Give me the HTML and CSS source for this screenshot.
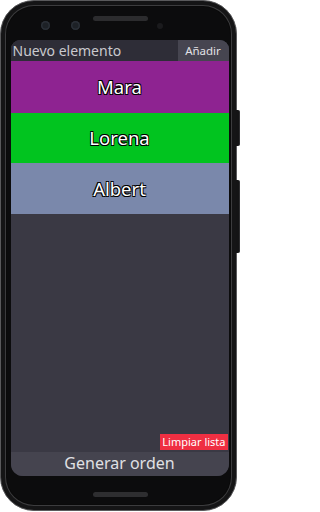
FILE: index.html
```html
<!DOCTYPE html>
<html lang="es">
<head>
<meta charset="utf-8">
<title>Orden</title>
<link rel="stylesheet" href="styles.css">
</head>
<body>
<div class="phone">
  <span class="side-btn power"></span>
  <span class="side-btn volume"></span>
  <div class="top">
    <span class="cam"></span>
    <span class="cam cam2"></span>
    <span class="speaker"></span>
    <span class="dot"></span>
  </div>
  <div class="screen">
    <div class="input-row">
      <div class="input">Nuevo elemento</div>
      <div class="add">Añadir</div>
    </div>
    <div class="item purple">Mara</div>
    <div class="item green">Lorena</div>
    <div class="item slate">Albert</div>
    <div class="spacer"></div>
    <div class="clear-row"><span class="clear">Limpiar lista</span></div>
    <div class="generate">Generar orden</div>
  </div>
  <div class="bottom">
    <span class="home"></span>
  </div>
</div>
</body>
</html>
```
FILE: styles.css
```css
html, body {
  margin: 0;
  padding: 0;
  background: #ffffff;
}
body {
  font-family: "Noto Sans", "Open Sans", sans-serif;
}
.phone {
  position: relative;
  box-sizing: border-box;
  width: 237px;
  height: 511px;
  border-radius: 34px;
  background: #0c0c0d;
  border: 1.5px solid #5a5a5c;
  box-shadow: inset 0 0 0 4px #151516, inset 0 0 0 5px #3c3c3e, inset 0 0 0 6px #0a0a0a;
  display: flex;
  flex-direction: column;
}
.side-btn {
  position: absolute;
  left: 235px;
  width: 3px;
  background: #141415;
  border-right: 1px solid #2e2e30;
  border-radius: 0 2px 2px 0;
}
.power { top: 109px; height: 36px; }
.volume { top: 179px; height: 73px; }
.top {
  height: 38.5px;
  display: flex;
  align-items: flex-start;
  padding-left: 39.5px;
}
.cam {
  width: 9px;
  height: 9px;
  margin-top: 19.5px;
  border-radius: 50%;
  background: #1d2126;
  box-shadow: inset 0 0 0 1.5px #2a2f36;
}
.cam2 { margin-left: 21px; }
.speaker {
  width: 55px;
  height: 5px;
  margin-left: 13px;
  margin-top: 15px;
  border-radius: 3px;
  background: #2c2c2e;
}
.dot {
  width: 6px;
  height: 6px;
  margin-left: 9px;
  margin-top: 21.5px;
  border-radius: 50%;
  background: #1b1b1d;
}
.screen {
  margin-left: 9.5px;
  width: 218px;
  height: 436px;
  background: #3a3944;
  border-radius: 9px 9px 12px 12px;
  overflow: hidden;
  display: flex;
  flex-direction: column;
}
.input-row {
  height: 21px;
  display: flex;
}
.input {
  flex: 1;
  background: #2e2d37;
  color: #c9c9ce;
  font-size: 14px;
  line-height: 21px;
  padding-left: 2px;
  white-space: nowrap;
}
.add {
  width: 51px;
  background: #464550;
  color: #e2e2e6;
  font-size: 11.5px;
  line-height: 21px;
  text-align: center;
}
.item {
  height: 51px;
  display: flex;
  align-items: center;
  justify-content: center;
  color: #ffffff;
  font-size: 18.5px;
  text-shadow: -0.8px -0.8px 0 #000, 0.8px -0.8px 0 #000, -0.8px 0.8px 0 #000, 0.8px 0.8px 0 #000;
}
.purple { background: #8e2391; height: 52px; }
.green { background: #01c41f; height: 50px; }
.slate { background: #7a88ab; }
.spacer { flex: 1; }
.clear-row {
  display: flex;
  justify-content: flex-end;
  padding-right: 1px;
  margin-bottom: 2px;
}
.clear {
  background: #ef2f42;
  color: #ffffff;
  font-size: 11px;
  line-height: 16px;
  padding: 0 2px;
}
.generate {
  height: 24px;
  background: #45444f;
  color: #e0e0e4;
  font-size: 16px;
  line-height: 23px;
  text-align: center;
}
.bottom {
  display: flex;
  justify-content: center;
  padding-top: 16px;
  padding-left: 3px;
}
.home {
  width: 55px;
  height: 5px;
  border-radius: 3px;
  background: #2e2e30;
}
```
